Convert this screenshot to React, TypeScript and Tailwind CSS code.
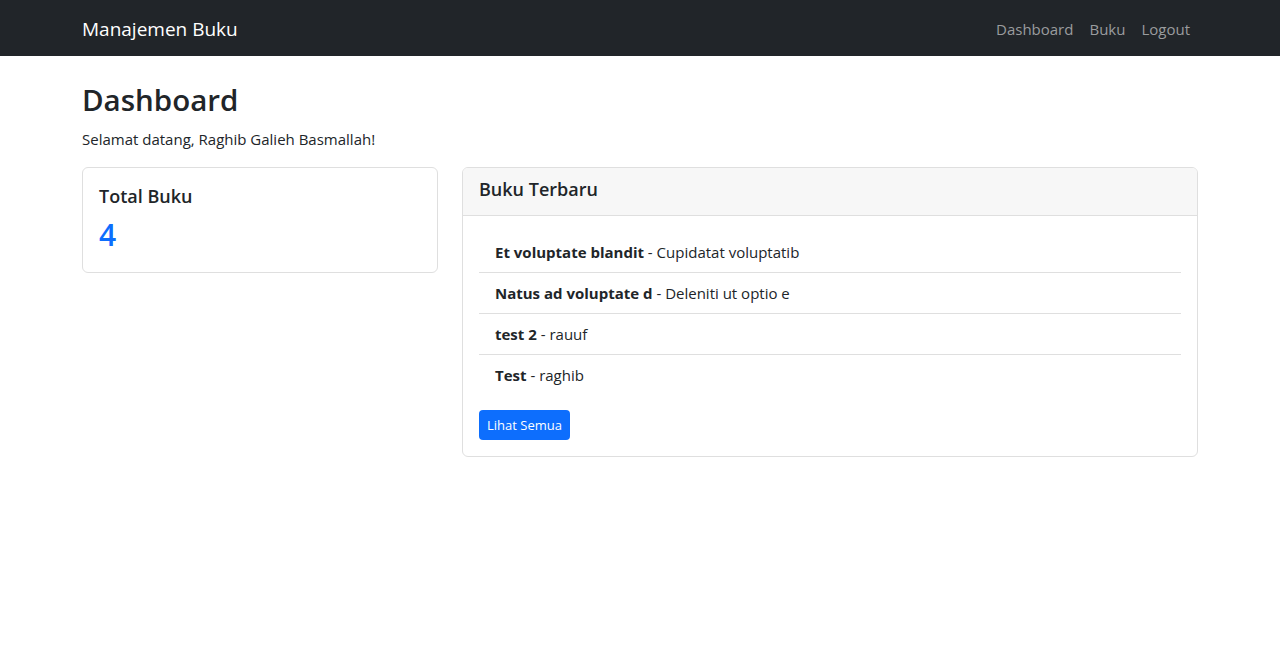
const books = [
  { title: "Et voluptate blandit", author: "Cupidatat voluptatib" },
  { title: "Natus ad voluptate d", author: "Deleniti ut optio e" },
  { title: "test 2", author: "rauuf" },
  { title: "Test", author: "raghib" },
];

export default function App() {
  return (
    <div
      className="min-h-screen bg-white text-[#212529] text-[15px] leading-6"
      style={{ fontFamily: '"Open Sans", "Noto Sans", "Liberation Sans", sans-serif' }}
    >
      {/* Navbar */}
      <nav className="bg-[#212529] h-14">
        <div className="mx-auto w-[1140px] px-3 h-full flex items-center justify-between">
          <a className="text-white text-[19px] leading-[30px] pt-[6px] pb-[4px]">Manajemen Buku</a>
          <ul className="flex pt-[2px]">
            {["Dashboard", "Buku", "Logout"].map((l) => (
              <li key={l}>
                <a className="block px-2 py-2 text-[#9a9c9e]">{l}</a>
              </li>
            ))}
          </ul>
        </div>
      </nav>

      {/* Content */}
      <div className="mx-auto w-[1140px] px-3">
        <h1 className="mt-5 mb-[3px] text-[29.5px] leading-[48px] font-semibold">Dashboard</h1>
        <p className="mb-[16px]">Selamat datang, Raghib Galieh Basmallah!</p>

        <div className="flex gap-6 items-start">
          <div className="w-[356px] border border-[#dfdfdf] rounded-md">
            <div className="p-4">
              <h5 className="text-[18px] leading-6 font-semibold mb-[6px]">Total Buku</h5>
              <div className="text-[30px] leading-[42px] font-semibold text-[#0d6efd]">4</div>
            </div>
          </div>

          <div className="flex-1 border border-[#dfdfdf] rounded-md overflow-hidden">
            <div className="bg-[#f7f7f7] border-b border-[#dfdfdf] px-4 pt-[9px] pb-[14px]">
              <h5 className="text-[18px] leading-6 font-semibold">Buku Terbaru</h5>
            </div>
            <div className="p-4">
              <ul className="mb-[15px]">
                {books.map((b, i) => (
                  <li
                    key={b.title}
                    className={`px-4 py-2 leading-6 ${i < books.length - 1 ? "border-b border-[#dfdfdf]" : ""}`}
                  >
                    <strong className="font-bold">{b.title}</strong> - {b.author}
                  </li>
                ))}
              </ul>
              <button className="bg-[#0d6efd] text-white text-[13px] leading-[22px] px-2 py-1 rounded">
                Lihat Semua
              </button>
            </div>
          </div>
        </div>
      </div>
    </div>
  );
}
